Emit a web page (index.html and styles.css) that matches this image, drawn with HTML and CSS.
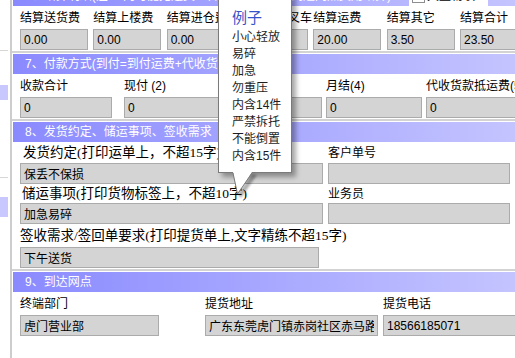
FILE: index.html
```html
<!DOCTYPE html>
<html lang="zh-CN">
<head>
  <meta charset="UTF-8" />
  <title>运单录入</title>
  <link rel="stylesheet" href="styles.css">
</head>
<body>

<div class="side">
  <div class="side-rule side-rule-1"></div>
  <div class="side-tab side-tab-1"></div>
  <div class="side-rule side-rule-2"></div>
  <div class="side-tab side-tab-2"></div>
</div>

<div class="panel">

  <div class="group">
    <div class="group-head">
      <span>6、结算明细(注:上门可能无运费上传的，请按实际到达网点费用结算)</span>
      <label class="head-check"><span class="check-box"></span>大型物联</label>
    </div>
    <div class="fields fees">
      <div class="field"><div class="lbl">结算送货费</div><input value="0.00" readonly /></div>
      <div class="field"><div class="lbl">结算上楼费</div><input value="0.00" readonly /></div>
      <div class="field"><div class="lbl">结算进仓费</div><input value="0.00" readonly /></div>
      <div class="field"><div class="lbl">结算装卸叉车</div><input value="0.00" readonly /></div>
      <div class="field"><div class="lbl">结算运费</div><input value="20.00" readonly /></div>
      <div class="field"><div class="lbl">结算其它</div><input value="3.50" readonly /></div>
      <div class="field"><div class="lbl">结算合计</div><input value="23.50" readonly /></div>
    </div>
  </div>

  <div class="group">
    <div class="group-head"><span>7、付款方式(到付=到付运费+代收货款)</span></div>
    <div class="fields pay">
      <div class="field"><div class="lbl">收款合计</div><input value="0" readonly /></div>
      <div class="field"><div class="lbl">现付 (2)</div><input value="0" readonly /></div>
      <div class="field"><div class="lbl">到付 (3)</div><input value="0" readonly /></div>
      <div class="field"><div class="lbl">月结(4)</div><input value="0" readonly /></div>
      <div class="field"><div class="lbl">代收货款抵运费(5)</div><input value="0" readonly /></div>
    </div>
  </div>

  <div class="group">
    <div class="group-head"><span>8、发货约定、储运事项、签收需求</span></div>
    <div class="fields notes">
      <div class="lbl lbl-big indent">发货约定(打印运单上，不超15字)</div>
      <div class="lbl">客户单号</div>
      <input value="保丢不保损" readonly />
      <input value="" readonly />
      <div class="lbl lbl-big indent-sm">储运事项(打印货物标签上，不超10字)</div>
      <div class="lbl">业务员</div>
      <input value="加急易碎" readonly />
      <input value="" readonly />
      <div class="lbl lbl-big lbl-wide">签收需求/签回单要求(打印提货单上,文字精练不超15字)</div>
      <input class="sign-input" value="下午送货" readonly />
    </div>
  </div>

  <div class="group group-last">
    <div class="group-head"><span>9、到达网点</span></div>
    <div class="fields arrive">
      <div class="field"><div class="lbl">终端部门</div><input class="dept-input" value="虎门营业部" readonly /></div>
      <div class="field"><div class="lbl">提货地址</div><input class="addr-input" value="广东东莞虎门镇赤岗社区赤马路" readonly /></div>
      <div class="field"><div class="lbl">提货电话</div><input value="18566185071" readonly /></div>
    </div>
  </div>

</div>

<div class="tip">
  <div class="tip-title">例子</div>
  <ul class="tip-list">
    <li>小心轻放</li>
    <li>易碎</li>
    <li>加急</li>
    <li>勿重压</li>
    <li>内含14件</li>
    <li>严禁拆托</li>
    <li>不能倒置</li>
    <li>内含15件</li>
  </ul>
</div>
<svg class="tip-tail" width="34" height="30" viewBox="0 0 34 30">
  <defs>
    <filter id="soft" x="-50%" y="-50%" width="200%" height="200%">
      <feGaussianBlur stdDeviation="1.2" />
    </filter>
  </defs>
  <polygon points="24,2 29,3 13,26 9.5,22" fill="#000" opacity="0.3" filter="url(#soft)" />
  <polygon points="5,0 9.5,22 24,0" fill="#fff" />
  <polyline points="5,1 9.5,22 24,1" fill="none" stroke="#7a7a7a" stroke-width="1" />
</svg>

</body>
</html>
```

FILE: styles.css
```css
html, body {
  margin: 0;
  padding: 0;
}

body {
  width: 515px;
  height: 358px;
  overflow: hidden;
  position: relative;
  display: flex;
  background: #fff;
  color: #000;
  font-family: "Liberation Sans", "Noto Sans CJK SC", sans-serif;
  font-size: 12px;
}

/* left strip of the window behind */
.side {
  flex: 0 0 10px;
  display: flex;
  flex-direction: column;
}

.side-rule {
  width: 8px;
  height: 1px;
  background: #d6d6d6;
}

.side-rule-1 {
  margin-top: 50px;
}

.side-rule-2 {
  margin-top: 77px;
}

.side-tab {
  width: 8px;
  background: #c8c8ff;
}

.side-tab-1 {
  margin-top: 34px;
  height: 15px;
}

.side-tab-2 {
  margin-top: 19px;
  height: 20px;
}

/* main panel, scrolled a little */
.panel {
  flex: 1;
  min-width: 0;
  margin-top: -14px;
  border-left: 2px solid #cdcdcd;
}

.group {
  border-bottom: 2px solid #d3d3d3;
  padding-bottom: 1px;
  margin-bottom: 1px;
}

.group-last {
  border-bottom: none;
}

.group-head {
  display: flex;
  height: 20px;
  line-height: 20px;
  margin-left: 1px;
  padding-left: 12px;
  color: #fff;
  white-space: nowrap;
  background: linear-gradient(to right, #8a8aff, #c4c4ff);
}

.head-check {
  display: flex;
  align-items: center;
  gap: 2px;
  box-sizing: border-box;
  width: 79px;
  margin-left: auto;
  margin-right: 27px;
  padding-left: 3px;
  background: #fff;
  color: #000;
}

.check-box {
  width: 11px;
  height: 11px;
  border: 1px solid #8e8e8e;
  background: #fff;
}

.fields {
  display: grid;
  padding: 3px 0 0 8px;
}

.lbl {
  height: 18px;
  line-height: 18px;
  margin-bottom: 2px;
  white-space: nowrap;
}

input {
  display: block;
  box-sizing: border-box;
  width: 100%;
  height: 21px;
  margin: 0;
  padding: 0 3px;
  border: 1px solid #ababab;
  background: #d4d4d4;
  color: #000;
  font: inherit;
  outline: none;
}

.fees {
  grid-template-columns: repeat(7, 68px);
  column-gap: 5.33px;
}

.pay {
  grid-template-columns: 100px 96px 98px 96px 96px;
  column-gap: 4px;
}

.pay .field:first-child input {
  width: 92px;
}

.notes {
  padding-top: 0;
  grid-template-columns: 303px 182px;
  grid-template-rows: 21px 21px 19px 21px 23px 21px;
  column-gap: 5px;
}

.notes .lbl {
  align-self: center;
  height: auto;
  line-height: 16px;
  margin: 0;
}

.lbl-big {
  font-family: "Liberation Serif", "Noto Sans CJK SC", serif;
  font-size: 13.5px;
}

.indent {
  padding-left: 3px;
}

.indent-sm {
  padding-left: 2px;
}

.lbl-wide {
  grid-column: 1 / 3;
}

.sign-input {
  width: 299px;
}

.arrive {
  grid-template-columns: 185px 178px 140px;
}

.dept-input {
  width: 139px;
}

.addr-input {
  width: 173px;
}

/* hint popup */
.tip {
  position: absolute;
  left: 218px;
  top: -10px;
  z-index: 2;
  box-sizing: border-box;
  width: 74px;
  padding: 15px 0 7px 13px;
  border: 1px solid #7a7a7a;
  background: #fff;
  box-shadow: 4px 4px 5px rgba(0, 0, 0, 0.35);
}

.tip-title {
  font-size: 15px;
  line-height: 23px;
  color: #3553c8;
}

.tip-list {
  margin: 0;
  padding: 0;
  list-style: none;
  line-height: 17px;
  color: #1e1e1e;
  white-space: nowrap;
}

.tip-tail {
  position: absolute;
  left: 228px;
  top: 172px;
  z-index: 3;
}
```
